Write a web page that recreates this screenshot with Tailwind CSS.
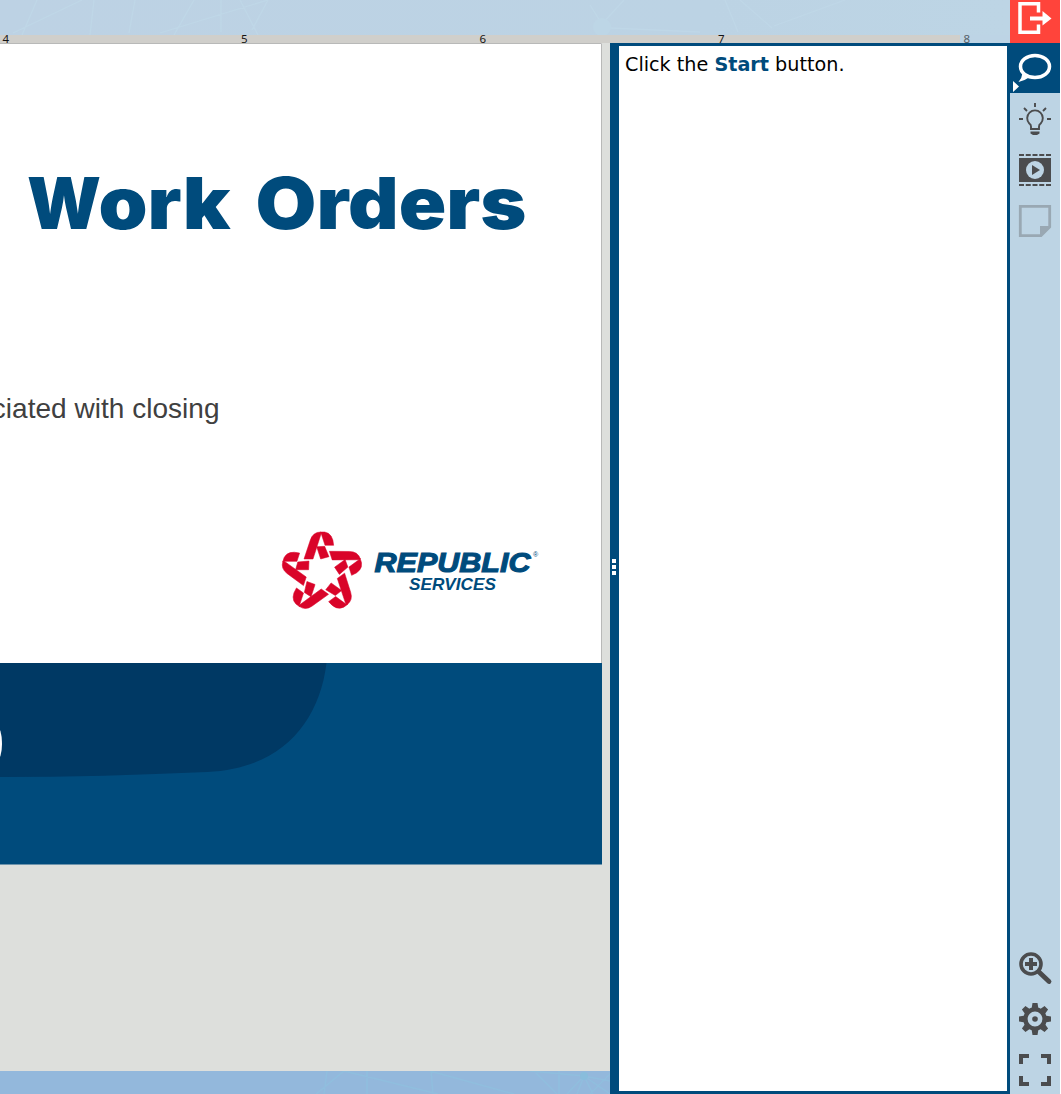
<!DOCTYPE html>
<html lang="en"><head><meta charset="utf-8"><title>Work Orders</title>
<script src="https://cdn.jsdelivr.net/npm/@tailwindcss/browser@4"></script></head>
<body class="flex h-[1094px] w-[1061px] overflow-hidden bg-white">
<div class="flex h-full w-[1010px] flex-col bg-[#bdd4e5]">
  <header class="relative h-[43px] shrink-0">
    <svg class="block h-[35px] w-full" viewBox="0 0 1010 35" fill="none" stroke="#bfd7e7" stroke-width="1.300"><defs><linearGradient id="sky"><stop stop-color="#bdd2e4"/><stop offset=".7" stop-color="#bcd3e4"/><stop offset="1" stop-color="#bdd5e5"/></linearGradient></defs><rect width="1010" height="35" fill="url(#sky)" stroke="none"/><path d="M13 33 82 0M37 0 22 35M94 0 90 35M135 0 129 33M160 33 268 0M194 0 174 35M221 0V32M240 0 258 35M268 0 252 30M624 0 602 24 590 5M610 28 700 32M725 0 738 32M772 28 740 0M774 26 845 0"/><circle cx="602" cy="27" r="9" fill="#bdd6e6" stroke="none"/></svg>
    <div class="h-2 w-[960px] bg-[#d0cfcb]"></div>
    <svg class="absolute left-0 top-0 h-[43px] w-[1010px] font-['Noto_Sans',sans-serif] text-[11.5px]" fill="#151515"><text x="2.500" y="43">4</text><text x="241" y="43">5</text><text x="479.500" y="43">6</text><text x="718" y="43">7</text><text x="963.500" y="43" fill="#555e65">8</text></svg>
  </header>
  <div class="flex min-h-0 grow">
    <main class="flex w-[610px] shrink-0 flex-col">
      <section class="h-[1028px] bg-[#dddfdc]">
        <svg class="block h-[822px] w-[602px]" viewBox="0 43 602 822">
          <path fill="#fff" d="M0 43H602V664H0z"/><path stroke="#b8b9b8" d="M0 43.500H601.500V663" fill="none"/>
          <g class="font-['Inter',sans-serif] text-[72px] font-black" fill="#004b7c"><text x="-42.500" y="229">e</text><text x="27" y="229" textLength="74" lengthAdjust="spacingAndGlyphs">W</text><text x="98.500" y="229" textLength="132" lengthAdjust="spacingAndGlyphs">ork</text><text x="255.500" y="229" textLength="271" lengthAdjust="spacingAndGlyphs">Orders</text></g>
          <text class="font-['Liberation_Sans',sans-serif] text-[28px]" x="219.500" y="418" text-anchor="end" textLength="287" fill="#404040">associated with closing</text>
          <svg x="270" y="520" width="110" height="100" viewBox="0 0 330 300"><defs><g id="ribbon"><path d="M102 117 121 60Q129 36 152 36L153 42 129 117z"/><path d="M150 36H164Q189 40 191 76L165 76 154 42z"/><path d="M140 80 164 79 177 110 152 117z"/></g></defs><g fill="#d90429" stroke="#d90429" stroke-width="1.500"><use href="#ribbon"/><use href="#ribbon" transform="rotate(72 156 158)"/><use href="#ribbon" transform="rotate(144 156 158)"/><use href="#ribbon" transform="rotate(216 156 158)"/><use href="#ribbon" transform="rotate(288 156 158)"/></g></svg>
          <g class="font-['Liberation_Sans',sans-serif] font-bold italic" fill="#004b7c"><text class="text-[27px]" x="374.500" y="571.500" textLength="156" lengthAdjust="spacingAndGlyphs" stroke="#004b7c" stroke-width="1.100">REPUBLIC</text><text class="text-[17px]" x="409" y="589.500" textLength="87" lengthAdjust="spacingAndGlyphs">SERVICES</text></g><text class="font-['Liberation_Sans',sans-serif] text-[7px]" x="533" y="557" fill="#004b7c">®</text>
          <path fill="#004b7c" d="M0 663H602V864.500H0z"/><path fill="#003964" d="M0 663H326.500C319 724 280 769 207 772C138 775 70 777 0 777z"/><ellipse cx="-3" cy="743.500" rx="5" ry="17" fill="#fff"/>
        </svg>
      </section>
      <svg class="block h-[23px] w-[610px]" viewBox="0 0 610 23" fill="none" stroke="#90bede" stroke-width="1.500"><path fill="#93b8dc" stroke="none" d="M0 0H610V23H0z"/><path d="M316 23 344 0 438 23M327 0 324 23M367 0V23M431 0 433 23M430 0 514 23M534 0 557 23M530 0 584 5 610 10M559 23V0M584 5 567 23M584 5 577 23M584 5 593 23M584 5 610 23M590 23 610 3"/><circle cx="584" cy="5" r="4" fill="#89bddc" stroke="none"/></svg>
    </main>
    <div class="flex w-[9px] shrink-0 flex-col items-center gap-[2px] bg-[#004b7c] pt-[516px]"><i class="mr-px h-1 w-1 bg-white"></i><i class="mr-px h-1 w-1 bg-white"></i><i class="mr-px h-1 w-1 bg-white"></i></div>
    <aside class="grow border-y-3 border-r-3 border-[#004b7c] bg-white pl-[6px] pt-[6px]">
      <svg class="block h-6 w-[230px] font-['DejaVu_Sans',sans-serif] text-[19px]"><text x="0" y="19" textLength="219.500" lengthAdjust="spacingAndGlyphs">Click the <tspan class="font-bold" fill="#004b7c">Start</tspan> button.</text></svg>
    </aside>
  </div>
</div>
<nav class="flex h-full w-[50px] flex-col bg-[#bdd4e4]">
  <div class="h-[43px] shrink-0 bg-[#ff443b]"><svg class="block h-[43px] w-[50px]" fill="none" stroke="#fff" stroke-width="3.500"><path d="M28.500 12.500V3.700H10V32.300H28.500V24.500"/><path d="M20 18.500H33" stroke-width="4"/><path d="M32.500 11 41.500 18.500 32.500 25.500z" fill="#fff" stroke="none"/></svg></div>
  <div class="h-[50px] shrink-0 bg-[#004b7c]"><svg class="block h-[50px] w-[50px]"><ellipse cx="25" cy="23.500" rx="14.500" ry="11" fill="none" stroke="#fff" stroke-width="3.500"/><path fill="#fff" d="M12.500 30Q12 35 8.500 39 14 38 19 34.500zM3 38V49L9 43.500z"/></svg></div>
  <svg class="block h-[51px] w-[50px] shrink-0" fill="none" stroke="#4b4c4e" stroke-width="1.900"><path d="M21 36V33.500Q21 31.500 19.300 30.500A7.800 7.800 0 1 1 30.700 30.500Q29 31.500 29 33.500V36z"/><path d="M25 10V14M14 15 17 18M36 15 33 18M9 26H13M37 26H41"/><path d="M20.500 38.500H29.500V40.500L27 42H23L20.500 40.500z" fill="#4b4c4e" stroke="none"/></svg>
  <svg class="block h-[51px] w-[50px] shrink-0"><path stroke="#4b4c4e" stroke-width="2" stroke-dasharray="5 1.750" d="M9 11H41M9 41H41"/><path fill="#4b4c4e" d="M9 14H41V38H9z"/><circle cx="25" cy="26" r="9" fill="#bdd4e4"/><path fill="#4b4c4e" d="M22 21V31L30 26z"/></svg>
  <svg class="block h-[51px] w-[50px] shrink-0"><path fill="none" stroke="#99a8b3" stroke-width="2.800" d="M10.300 11.300H39.700V32L31 40.700H10.300z"/><path fill="#99a8b3" d="M30 41V31H41z"/></svg>
  <div class="grow"></div>
  <svg class="block h-[51px] w-[50px] shrink-0" fill="none" stroke="#4b4c4e"><circle cx="21" cy="22" r="10" stroke-width="3.600"/><path stroke-width="4" d="M21 16V28M15 22H27"/><path stroke-width="4.800" stroke-linecap="round" d="M29 30 39 39.500"/></svg>
  <svg class="block h-[51px] w-[50px] shrink-0" fill="#4b4c4e"><circle cx="25" cy="26" r="9.600" fill="none" stroke="#4b4c4e" stroke-width="4.400"/><circle cx="25" cy="26" r="2.800"/><g id="teeth"><path d="M22.500 10H27.500L28.500 16H21.500zM22.500 42H27.500L28.500 36H21.500zM9 23.500V28.500L15 29.500V22.500zM41 23.500V28.500L35 29.500V22.500z"/></g><use href="#teeth" transform="rotate(45 25 26)"/></svg>
  <svg class="block h-[50px] w-[50px] shrink-0" fill="none" stroke="#4b4c4e" stroke-width="4"><path d="M11 20V12H19M31 12H39V20M11 32V40H19M31 40H39V32"/></svg>
</nav>
</body></html>
